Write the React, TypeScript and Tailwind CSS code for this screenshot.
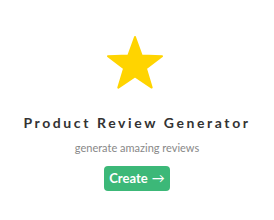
import React from 'react';

export default function App() {
    return (
        <div className="w-[274px] h-[220px] bg-white flex flex-col items-center" style={{ fontFamily: 'Lato, "Liberation Sans", sans-serif' }}>
            {/* Star */}
            <svg width="60" height="56" viewBox="0 0 60 56" className="mt-[34px] ml-[-4px]">
                <polygon
                    points="30,3 36.7,21.6 57,22.2 40.9,34.4 46.7,53.6 30,42.3 13.3,53.6 19.1,34.4 3,22.2 23.3,21.6"
                    fill="#FFD400"
                    stroke="#FFD400"
                    strokeWidth="2"
                    strokeLinejoin="round"
                />
            </svg>

            <h1 className="mt-[24px] text-[14px] leading-[18px] font-bold tracking-[2.6px] text-[#333]">Product Review Generator</h1>
            <p className="mt-[9px] text-[11px] leading-[14px] text-[#888]">generate amazing reviews</p>

            <button className="mt-[11px] w-[66px] h-[25px] rounded-[4px] bg-[#3cb878] text-white text-[13px] font-bold flex items-center justify-center gap-1">
                Create <span className="font-normal">→</span>
            </button>
        </div>
    );
}
